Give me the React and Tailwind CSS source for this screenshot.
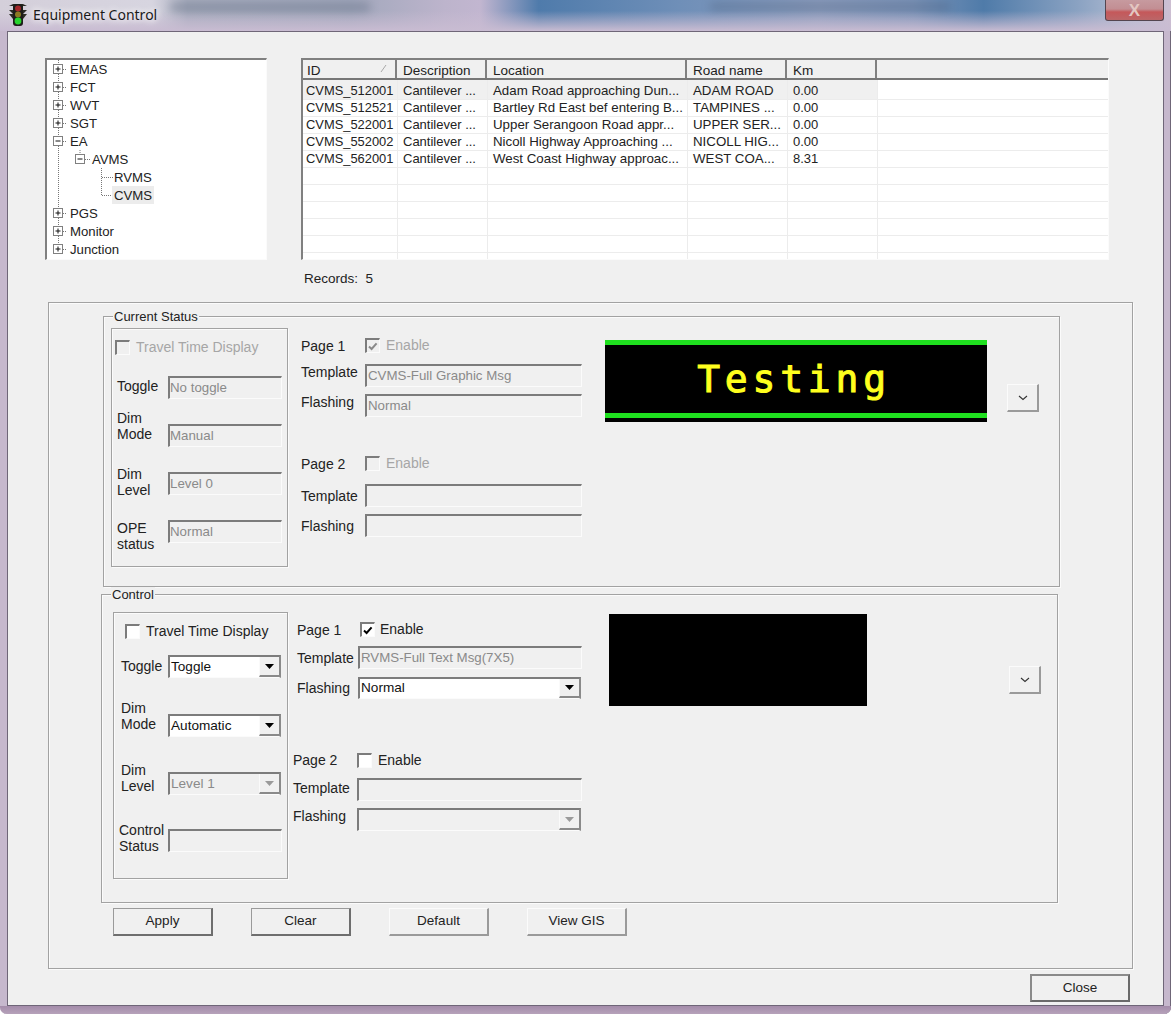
import React from "react";

const FONT = "font-['Liberation_Sans',Arial,sans-serif]";

function Sunken({ className = "", text, white }) {
  return (
    <div className={`box-border flex items-center overflow-hidden whitespace-nowrap border-t-2 border-l-2 border-r border-b border-t-[#7c7c7c] border-l-[#7c7c7c] border-r-[#fbfbfb] border-b-[#fbfbfb] text-[13.3px] text-[#8a8a8a] ${white ? "bg-white" : "bg-[#f0f0f0]"} ${className}`}>
      {text}
    </div>
  );
}

function Combo({ className = "", text, enabled }) {
  return (
    <div className={`box-border flex items-center border-t-2 border-l-2 border-r-2 border-b border-t-[#7c7c7c] border-l-[#7c7c7c] border-r-[#8a8a8a] border-b-[#fbfbfb] text-[13.6px] ${enabled ? "bg-white text-[#111]" : "bg-[#f0f0f0] text-[#8a8a8a]"} ${className}`}>
      <span className="flex-1 overflow-hidden whitespace-nowrap pl-px">{text}</span>
      <span className="flex h-full w-[20px] shrink-0 items-center justify-center border-b-2 border-l border-b-[#8a8a8a] border-l-[#fafafa] bg-[#f0f0f0]">
        <svg width="9" height="5" viewBox="0 0 9 5">
          <path d="M0 0H9L4.5 5Z" fill={enabled ? "#000" : "#9a9a9a"} />
        </svg>
      </span>
    </div>
  );
}

function Check({ checked, disabled, className = "" }) {
  return (
    <span className={`box-border flex h-[15px] w-[15px] shrink-0 items-center justify-center border-t-2 border-l-2 border-r border-b border-t-[#7c7c7c] border-l-[#7c7c7c] border-r-[#fbfbfb] border-b-[#fbfbfb] ${disabled ? "bg-[#f0f0f0]" : "bg-white"} ${className}`}>
      {checked && (
        <svg width="10" height="9" viewBox="0 0 10 9">
          <path d="M1 4.5L3.6 7L8.6 1.4" fill="none" stroke={disabled ? "#8a8a8a" : "#000"} strokeWidth="2" />
        </svg>
      )}
    </span>
  );
}

function Raised({ strong, heavy, className = "", children }) {
  const edge = heavy
    ? "border-2 border-t-[#8a8a8a] border-l-[#8a8a8a] border-r-[#6a6a6a] border-b-[#6a6a6a]"
    : strong
    ? "border-t border-l border-r-2 border-b-2 border-t-[#9a9a9a] border-l-[#9a9a9a] border-r-[#6e6e6e] border-b-[#6e6e6e]"
    : "border-t border-l border-r-2 border-b-2 border-t-[#fbfbfb] border-l-[#fbfbfb] border-r-[#9a9a9a] border-b-[#9a9a9a]";
  return (
    <div className={`box-border flex items-center justify-center bg-[#f0f0f0] text-[13.5px] text-[#222] ${edge} ${className}`}>
      {children}
    </div>
  );
}

function Chevron({ className }) {
  return (
    <Raised className={className}>
      <svg width="10" height="6" viewBox="0 0 10 6">
        <path d="M1 1L5 4.5L9 1" fill="none" stroke="#333" strokeWidth="1.1" />
      </svg>
    </Raised>
  );
}

function Group({ title, className = "", legendClass = "", children }) {
  return (
    <div className={`relative box-border flex border border-[#a2a2a2] shadow-[1px_1px_0_#fbfbfb,inset_1px_1px_0_#fbfbfb] ${className}`}>
      <span className={`absolute top-[-8px] bg-[#f0f0f0] px-px leading-4 text-[#222] ${legendClass}`}>{title}</span>
      {children}
    </div>
  );
}

function Box({ className = "", children }) {
  return (
    <div className={`box-border flex shrink-0 flex-col border border-[#a2a2a2] shadow-[1px_1px_0_#fbfbfb,inset_1px_1px_0_#fbfbfb] ${className}`}>
      {children}
    </div>
  );
}

function Field({ label, labelClass, className = "", children }) {
  return (
    <div className={`flex items-start ${className}`}>
      <div className={`shrink-0 text-[14px] leading-4 ${labelClass}`}>{label}</div>
      {children}
    </div>
  );
}

function PageRow({ label, labelClass, className = "", checked, disabled, gap }) {
  return (
    <div className={`flex h-[15px] items-center ${className}`}>
      <span className={`text-[14px] leading-4 ${labelClass}`}>{label}</span>
      <Check checked={checked} disabled={disabled} />
      <span className={`text-[14px] ${gap} ${disabled ? "text-[#a6a6a6]" : "text-[#222]"}`}>Enable</span>
    </div>
  );
}

const DOT = { strokeDasharray: "1 1", stroke: "#777", strokeWidth: 1, fill: "none" };

function PlusBox({ x, minus }) {
  return (
    <>
      <rect x={x} y="4.5" width="9" height="9" fill="#fff" stroke="#808080" />
      <path d={`M${x + 2} 9H${x + 7}`} stroke="#111" />
      {!minus && <path d={`M${x + 4.5} 6.5V11.5`} stroke="#111" />}
    </>
  );
}

function TreeRow({ name, kind, selected }) {
  const widths = { top: 23, last: 23, ea: 23, avms: 45, rvms: 67, cvms: 67 };
  const w = widths[kind];
  return (
    <div className="flex h-[18px] shrink-0 items-center text-[13.2px] text-[#222]">
      <svg width={w} height="18" viewBox={`0 0 ${w} 18`} className="shrink-0">
        {kind !== "last" && <path d="M11.5 0V18" {...DOT} />}
        {kind === "last" && <path d="M11.5 0V9" {...DOT} />}
        {(kind === "top" || kind === "last" || kind === "ea") && (
          <>
            <path d="M16 9.5H20" {...DOT} />
            <PlusBox x={6.5} minus={kind === "ea"} />
          </>
        )}
        {kind === "avms" && (
          <>
            <path d="M33 0V5M38 9.5H43M54.5 14V18" {...DOT} />
            <PlusBox x={28.5} minus />
          </>
        )}
        {kind === "rvms" && <path d="M54.5 0V18M55 9.5H66" {...DOT} />}
        {kind === "cvms" && <path d="M54.5 0V9.5M55 9.5H66" {...DOT} />}
      </svg>
      <span className={`flex h-[18px] items-center pt-[2px] ${selected ? "-ml-[2px] bg-[#ececec] px-[2px]" : ""}`}>{name}</span>
    </div>
  );
}

const HEADCOLS = ["w-[94px] pl-[4px]", "w-[90px] pl-[6px]", "w-[200px] pl-[6px]", "w-[100px] pl-[6px]", "w-[90px] pl-[6px]"];
const BODYCOLS = [
  "w-[95px] pl-[3px] text-[12.9px]",
  "w-[90px] pl-[5px] text-[13px]",
  "w-[200px] pl-[5px] text-[13.3px]",
  "w-[100px] pl-[5px] text-[13.3px]",
  "w-[90px] pl-[5px] text-[13px]",
];
const ROWS = [
  ["CVMS_512001", "Cantilever ...", "Adam Road approaching Dun...", "ADAM ROAD", "0.00"],
  ["CVMS_512521", "Cantilever ...", "Bartley Rd East bef entering B...", "TAMPINES ...", "0.00"],
  ["CVMS_522001", "Cantilever ...", "Upper Serangoon Road appr...", "UPPER SER...", "0.00"],
  ["CVMS_552002", "Cantilever ...", "Nicoll Highway Approaching ...", "NICOLL HIG...", "0.00"],
  ["CVMS_562001", "Cantilever ...", "West Coast Highway approac...", "WEST COA...", "8.31"],
  ["", "", "", "", ""],
  ["", "", "", "", ""],
  ["", "", "", "", ""],
  ["", "", "", "", ""],
  ["", "", "", "", ""],
  ["", "", "", "", ""],
];
const HEAD = ["ID", "Description", "Location", "Road name", "Km"];

function Table() {
  return (
    <div className="box-border flex h-[202px] w-[808px] flex-col overflow-hidden border-t-2 border-l-2 border-r border-b border-t-[#808080] border-l-[#808080] border-r-[#fbfbfb] border-b-[#fbfbfb] bg-white">
      <div className="flex h-[20px] shrink-0 border-b-2 border-b-[#777] bg-[#f0f0f0] text-[13.5px] leading-[21px] text-[#222]">
        {HEAD.map((h, i) => (
          <div key={h} className={`relative box-border shrink-0 border-r-2 border-r-[#808080] ${HEADCOLS[i]}`}>
            {h}
            {i === 0 && (
              <svg width="8" height="9" viewBox="0 0 8 9" className="absolute right-[7px] top-[4px]">
                <path d="M1 8L6 1" stroke="#a8a8a8" />
              </svg>
            )}
          </div>
        ))}
      </div>
      {ROWS.map((r, ri) => (
        <div
          key={ri}
          className={`flex leading-[15px] text-[#222] ${ri === 0 ? "h-[20px]" : ri === 10 ? "min-h-0 flex-1" : "h-[17px]"} ${ri === 10 ? "" : "shrink-0 border-b border-b-[#ececec]"}`}
        >
          {r.map((c, i) => (
            <div
              key={i}
              className={`box-border h-full shrink-0 overflow-hidden whitespace-nowrap border-r border-r-[#ececec] ${BODYCOLS[i]} ${ri === 0 ? "bg-[#f0f0f0] pt-[3px]" : ""}`}
            >
              {c}
            </div>
          ))}
        </div>
      ))}
    </div>
  );
}

function CurrentStatus() {
  return (
    <Group title="Current Status" legendClass="left-[9px]" className="ml-[54px] mt-[13px] h-[271px] w-[957px]">
      <Box className="ml-[7px] mt-[11px] h-[239px] w-[177px]">
        <div className="mt-[11px] flex h-[15px] items-center pl-[3px]">
          <Check disabled />
          <span className="ml-[6px] text-[14px] text-[#a6a6a6]">Travel Time Display</span>
        </div>
        <Field label="Toggle" labelClass="w-[56px] pl-[5px] pt-[2px]" className="mt-[21px] h-[23px]">
          <Sunken text="No toggle" className="h-[23px] w-[114px] pl-0" />
        </Field>
        <Field label={<>Dim<br />Mode</>} labelClass="w-[56px] pl-[5px] -mt-[14px]" className="mt-[25px] h-[23px]">
          <Sunken text="Manual" className="h-[23px] w-[114px] pl-0" />
        </Field>
        <Field label={<>Dim<br />Level</>} labelClass="w-[56px] pl-[5px] -mt-[6px]" className="mt-[25px] h-[23px]">
          <Sunken text="Level 0" className="h-[23px] w-[114px] pl-0" />
        </Field>
        <Field label={<>OPE<br />status</>} labelClass="w-[56px] pl-[5px]" className="mt-[25px] h-[23px]">
          <Sunken text="Normal" className="h-[23px] w-[114px] pl-0" />
        </Field>
      </Box>
      <div className="ml-[13px] mt-[21px] flex w-[281px] shrink-0 flex-col">
        <PageRow label="Page 1" labelClass="w-[64px]" checked disabled gap="ml-[6px]" />
        <Field label="Template" labelClass="w-[64px]" className="mt-[11px]">
          <Sunken text="CVMS-Full Graphic Msg" className="h-[23px] w-[217px] pl-px" />
        </Field>
        <Field label="Flashing" labelClass="w-[64px]" className="mt-[7px]">
          <Sunken text="Normal" className="h-[23px] w-[217px] pl-px" />
        </Field>
        <PageRow label="Page 2" labelClass="w-[64px]" className="mt-[39px]" disabled gap="ml-[6px]" />
        <Field label="Template" labelClass="w-[64px] pt-[4px]" className="mt-[13px]">
          <Sunken className="h-[23px] w-[217px]" />
        </Field>
        <Field label="Flashing" labelClass="w-[64px] pt-[4px]" className="mt-[7px]">
          <Sunken className="h-[23px] w-[217px]" />
        </Field>
      </div>
      <div className="ml-[23px] mt-[23px] box-border flex h-[82px] w-[382px] shrink-0 flex-col bg-black">
        <div className="h-[5px] shrink-0 bg-[#1fe01f]" />
        <div className="flex h-[68px] shrink-0 items-center justify-center whitespace-nowrap pr-[4px] font-['DejaVu_Sans_Mono',monospace] text-[38px] tracking-[4.8px] text-[#ffff1e] [-webkit-text-stroke:1px_#ffff1e]">
          Testing
        </div>
        <div className="h-[5px] shrink-0 bg-[#1fe01f]" />
      </div>
      <Chevron className="ml-[20px] mt-[67px] h-[28px] w-[32px] shrink-0" />
    </Group>
  );
}

function Control() {
  return (
    <Group title="Control" legendClass="left-[9px]" className="ml-[52px] mt-[7px] h-[309px] w-[957px]">
      <Box className="ml-[11px] mt-[17px] h-[267px] w-[175px]">
        <div className="mt-[11px] flex h-[15px] items-center pl-[11px]">
          <Check />
          <span className="ml-[6px] text-[14px] text-[#222]">Travel Time Display</span>
        </div>
        <Field label="Toggle" labelClass="w-[54px] pl-[7px] pt-[3px]" className="mt-[16px] h-[23px]">
          <Combo enabled text="Toggle" className="h-[23px] w-[113px]" />
        </Field>
        <Field label={<>Dim<br />Mode</>} labelClass="w-[54px] pl-[7px] -mt-[14px]" className="mt-[36px] h-[23px]">
          <Combo enabled text="Automatic" className="h-[23px] w-[113px]" />
        </Field>
        <Field label={<>Dim<br />Level</>} labelClass="w-[54px] pl-[7px] -mt-[10px]" className="mt-[35px] h-[23px]">
          <Combo text="Level 1" className="h-[23px] w-[113px]" />
        </Field>
        <Field label={<>Control<br />Status</>} labelClass="w-[54px] pl-[5px] -mt-[7px]" className="mt-[34px] h-[23px]">
          <Sunken className="h-[23px] w-[114px]" />
        </Field>
      </Box>
      <div className="ml-[5px] mt-[27px] flex w-[289px] shrink-0 flex-col">
        <PageRow label="Page 1" labelClass="w-[63px]" className="pl-[4px]" checked gap="ml-[5px]" />
        <Field label="Template" labelClass="w-[61px] pt-[4px]" className="mt-[9px] pl-[4px]">
          <Sunken text="RVMS-Full Text Msg(7X5)" className="h-[23px] w-[224px] pl-px" />
        </Field>
        <Field label="Flashing" labelClass="w-[61px] pt-[3px]" className="mt-[8px] pl-[4px]">
          <Combo enabled text="Normal" className="h-[22px] w-[223px]" />
        </Field>
        <PageRow label="Page 2" labelClass="w-[64px] -mt-[2px]" className="mt-[54px]" gap="ml-[6px]" />
        <Field label="Template" labelClass="w-[64px] pt-[2px]" className="mt-[10px]">
          <Sunken className="h-[23px] w-[225px]" />
        </Field>
        <Field label="Flashing" labelClass="w-[64px]" className="mt-[7px]">
          <Combo className="h-[23px] w-[224px]" />
        </Field>
      </div>
      <div className="ml-[27px] mt-[19px] h-[92px] w-[258px] shrink-0 bg-black" />
      <Chevron className="ml-[142px] mt-[71px] h-[28px] w-[32px] shrink-0" />
    </Group>
  );
}

function Light() {
  return (
    <svg width="18" height="22" viewBox="0 0 18 22">
      <path d="M0 2H4V6H0L4 10H0L4 15H14L18 10H14L18 6H14V2H18L14 0H4Z" fill="#2b2a24" />
      <rect x="4" y="0" width="10" height="22" rx="3" fill="#1d1d1a" />
      <circle cx="9" cy="4.5" r="3" fill="#a3262a" />
      <circle cx="9" cy="10.5" r="3" fill="#8b7a22" />
      <circle cx="9" cy="17" r="3.4" fill="#27d42e" />
    </svg>
  );
}

export default function App() {
  return (
    <div className={`relative box-border flex h-[1014px] w-[1171px] flex-col overflow-hidden rounded-b-[7px] bg-[#c6b8cd] text-[13px] shadow-[inset_-1px_0_0_#6f6678] ${FONT}`}>
      <div className="relative flex h-[31px] shrink-0 items-center overflow-hidden bg-[linear-gradient(180deg,rgba(200,186,208,0)_35%,#c9bcd2_100%),linear-gradient(90deg,#d4cfda_0%,#d7d5e0_13%,#a9aebf_16%,#a2a8bc_30%,#bdb4cc_38%,#c2b6d0_41%,#4f7bab_46%,#6f8fb8_58%,#8a9cbd_70%,#7b93b8_78%,#4f7ba9_84%,#8aa2c2_92%,#b6bfd4_97%,#cdbfd2_100%)] pb-[2px] pl-[9px]">
        <div className="absolute left-[170px] top-[3px] h-[8px] w-[200px] bg-[#4b5870] opacity-40 blur-[5px]" />
        <div className="absolute left-[710px] top-[3px] h-[7px] w-[240px] bg-[#3e4f6a] opacity-35 blur-[5px]" />
        <div className="relative flex items-center">
          <Light />
          <span className="ml-[6px] font-['Noto_Sans',sans-serif] text-[14px] text-[#1a1a1a] [text-shadow:0_0_6px_#fff,0_0_8px_#fff]">Equipment Control</span>
        </div>
        <div className="relative ml-auto mr-[7px] flex h-[21px] w-[59px] -translate-y-[4px] items-center justify-center rounded-b-[3px] border border-t-0 border-[#54454f] bg-[linear-gradient(180deg,#c79a9f_0%,#c28e93_45%,#c5585a_60%,#bb6668_100%)] text-[17px] font-bold leading-none text-[#e3c6c2]">
          X
        </div>
      </div>
      <div className="mx-[7px] box-border flex h-[975px] shrink-0 flex-col border border-[#6f6678] bg-[#f0f0f0] text-[#222]">
        <div className="ml-[37px] mt-[26px] flex">
          <div className="box-border flex h-[202px] w-[222px] shrink-0 flex-col overflow-hidden border-t-2 border-l-2 border-r border-b border-t-[#808080] border-l-[#808080] border-r-[#fbfbfb] border-b-[#fbfbfb] bg-white">
            <TreeRow name="EMAS" kind="top" />
            <TreeRow name="FCT" kind="top" />
            <TreeRow name="WVT" kind="top" />
            <TreeRow name="SGT" kind="top" />
            <TreeRow name="EA" kind="ea" />
            <TreeRow name="AVMS" kind="avms" />
            <TreeRow name="RVMS" kind="rvms" />
            <TreeRow name="CVMS" kind="cvms" selected />
            <TreeRow name="PGS" kind="top" />
            <TreeRow name="Monitor" kind="top" />
            <TreeRow name="Junction" kind="last" />
          </div>
          <div className="ml-[34px]">
            <Table />
          </div>
        </div>
        <div className="ml-[296px] mt-[9px] h-[20px] whitespace-pre text-[13.5px] leading-5">Records:  5</div>
        <div className="ml-[40px] mt-[13px] box-border flex h-[667px] w-[1085px] shrink-0 flex-col border border-[#a2a2a2] shadow-[1px_1px_0_#fbfbfb,inset_1px_1px_0_#fbfbfb]">
          <CurrentStatus />
          <Control />
          <div className="ml-[64px] mt-[5px] flex gap-[38px]">
            <Raised strong className="h-[28px] w-[100px]">Apply</Raised>
            <Raised strong className="h-[28px] w-[100px]">Clear</Raised>
            <Raised className="h-[28px] w-[100px]">Default</Raised>
            <Raised className="h-[28px] w-[100px]">View GIS</Raised>
          </div>
        </div>
        <div className="mr-[33px] mt-[5px] flex justify-end">
          <Raised heavy className="h-[28px] w-[100px]">Close</Raised>
        </div>
      </div>
      <div className="h-[8px] shrink-0 bg-[linear-gradient(180deg,#a48caa_0%,#b6a2ba_100%)]" />
    </div>
  );
}
